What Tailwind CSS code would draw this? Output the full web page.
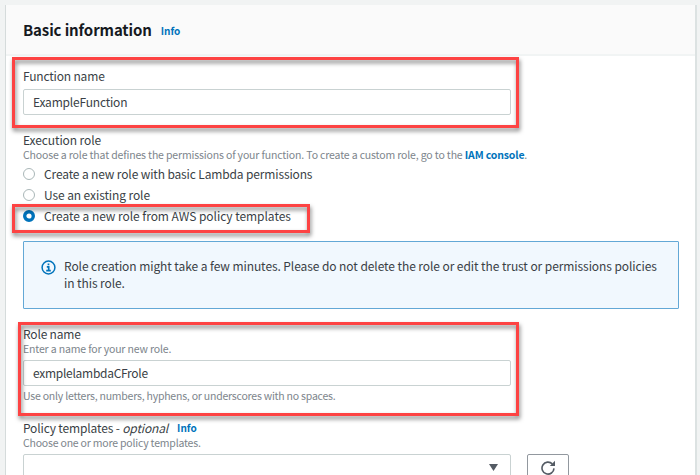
<!DOCTYPE html>
<html lang="en">
<head>
<meta charset="utf-8">
<title>Basic information</title>
<script src="https://cdn.jsdelivr.net/npm/@tailwindcss/browser@4"></script>
</head>
<body class="relative h-[475px] w-[700px] overflow-hidden bg-[#f1f3f3] pl-[5px] pt-[5px] font-['Noto_Sans_CJK_JP','Noto_Sans',sans-serif] text-[12px] tracking-[-0.1px] text-[#3a3f46]">
<main class="h-[480px] w-[692px] whitespace-nowrap border-l border-r-2 border-l-[#d5dbdb] border-r-[#dce2e2] bg-white">
  <header class="flex h-[51px] items-center gap-[9px] border-b-2 border-[#f1f4f4] bg-[#fafafa] pl-[17px]">
    <h1 class="text-[15px] font-bold leading-5 tracking-[-0.12px] text-[#16191f]">Basic information</h1>
    <a class="mt-[2px] text-[10px] font-bold tracking-normal text-[#0073bb]">Info</a>
  </header>
  <div class="pl-[17px]">
    <section class="pt-[11px]">
      <label class="block h-[22px] leading-[18px] tracking-[-0.18px]">Function name</label>
      <div class="flex h-[26px] w-[488px] items-center rounded-[2px] border border-[#c9d2d2] pl-[9px] tracking-[-0.2px]">ExampleFunction</div>
    </section>
    <section class="pt-[16px]">
      <h2 class="h-4 leading-[18px]">Execution role</h2>
      <p class="h-4 text-[10.5px] leading-4 tracking-[-0.15px] text-[#7d858c]">Choose a role that defines the permissions of your function. To create a custom role, go to the <a class="font-bold text-[#0073bb]">IAM console</a>.</p>
      <div class="flex h-[21px] items-center gap-[9px] tracking-[-0.14px]"><span class="size-3 rounded-full border border-[#aab7b8]"></span><span>Create a new role with basic Lambda permissions</span></div>
      <div class="flex h-[21px] items-center gap-[9px]"><span class="size-3 rounded-full border border-[#aab7b8]"></span><span>Use an existing role</span></div>
      <div class="flex h-[21px] items-center gap-[9px] tracking-[-0.05px]"><svg class="size-3" viewBox="0 0 12 12"><circle cx="6" cy="6" r="4.3" fill="white" stroke="#0073bb" stroke-width="3.4"/></svg><span>Create a new role from AWS policy templates</span></div>
    </section>
    <aside class="mt-[15px] flex h-[68px] w-[656px] rounded-[1px] border border-[#63a8d6] bg-[#f1f8fe] pl-[17px] pt-[18px]">
      <svg class="size-[15px] shrink-0" viewBox="0 0 15 15" fill="none" stroke="#0073bb"><circle cx="7.5" cy="7.5" r="6.4" stroke-width="1.5"/><path d="M7.5 3.4v1.8M5.8 6.8h1.9v3.6M5.2 10.6h4.6" stroke-width="1.7"/></svg>
      <p class="-mt-[2px] ml-2 leading-[16.5px] tracking-[-0.08px]">Role creation might take a few minutes. Please do not delete the role or edit the trust or permissions policies<br>in this role.</p>
    </aside>
    <section class="pt-[16px]">
      <label class="block h-4 leading-[18px] tracking-[-0.18px]">Role name</label>
      <p class="h-[19px] text-[10.5px] leading-4 tracking-[-0.15px] text-[#7d858c]">Enter a name for your new role.</p>
      <div class="flex h-[26px] w-[488px] items-center rounded-[2px] border border-[#c9d2d2] pl-[9px] tracking-[-0.28px]">exmplelambdaCFrole</div>
      <p class="mt-[2px] h-4 text-[10.5px] leading-4 tracking-[-0.22px] text-[#7d858c]">Use only letters, numbers, hyphens, or underscores with no spaces.</p>
    </section>
    <section class="pt-[15px]">
      <div class="flex h-4 gap-[9px] leading-[18px] tracking-[-0.15px]"><span>Policy templates - <i>optional</i></span><a class="text-[10px] font-bold tracking-normal text-[#0073bb]">Info</a></div>
      <p class="h-[19px] text-[10.5px] leading-4 tracking-[-0.2px] text-[#7d858c]">Choose one or more policy templates.</p>
      <div class="flex gap-4">
        <div class="flex h-[26px] w-[488px] justify-end rounded-[2px] border border-[#c9d2d2] pr-[12px] pt-[9px]"><svg class="h-[7px] w-[9px]" viewBox="0 0 9 7"><path d="M0 0h9L4.5 7z" fill="#545b64"/></svg></div>
        <div class="flex h-[26px] w-[42px] justify-center rounded-[2px] border border-[#92989f] pt-[5px]"><svg class="size-4" viewBox="0 0 16 16" fill="none" stroke="#545b64" stroke-width="1.6"><path d="M14 8.4A6 6 0 1 1 12.3 3.9"/><path d="M15 .8v5.2H9.8z" fill="#545b64" stroke="none"/></svg></div>
      </div>
    </section>
  </div>
</main>
<div class="absolute left-[12px] top-[57px] h-[71px] w-[507px] border-3 border-[#fd4343] drop-shadow-[1px_3px_2px_rgba(0,0,0,0.5)]"></div>
<div class="absolute left-[12px] top-[204px] h-[29px] w-[298px] border-3 border-[#fd4343] drop-shadow-[1px_3px_2px_rgba(0,0,0,0.5)]"></div>
<div class="absolute left-[18px] top-[322px] h-[94px] w-[501px] border-3 border-[#fd4343] drop-shadow-[1px_3px_2px_rgba(0,0,0,0.5)]"></div>
</body>
</html>
